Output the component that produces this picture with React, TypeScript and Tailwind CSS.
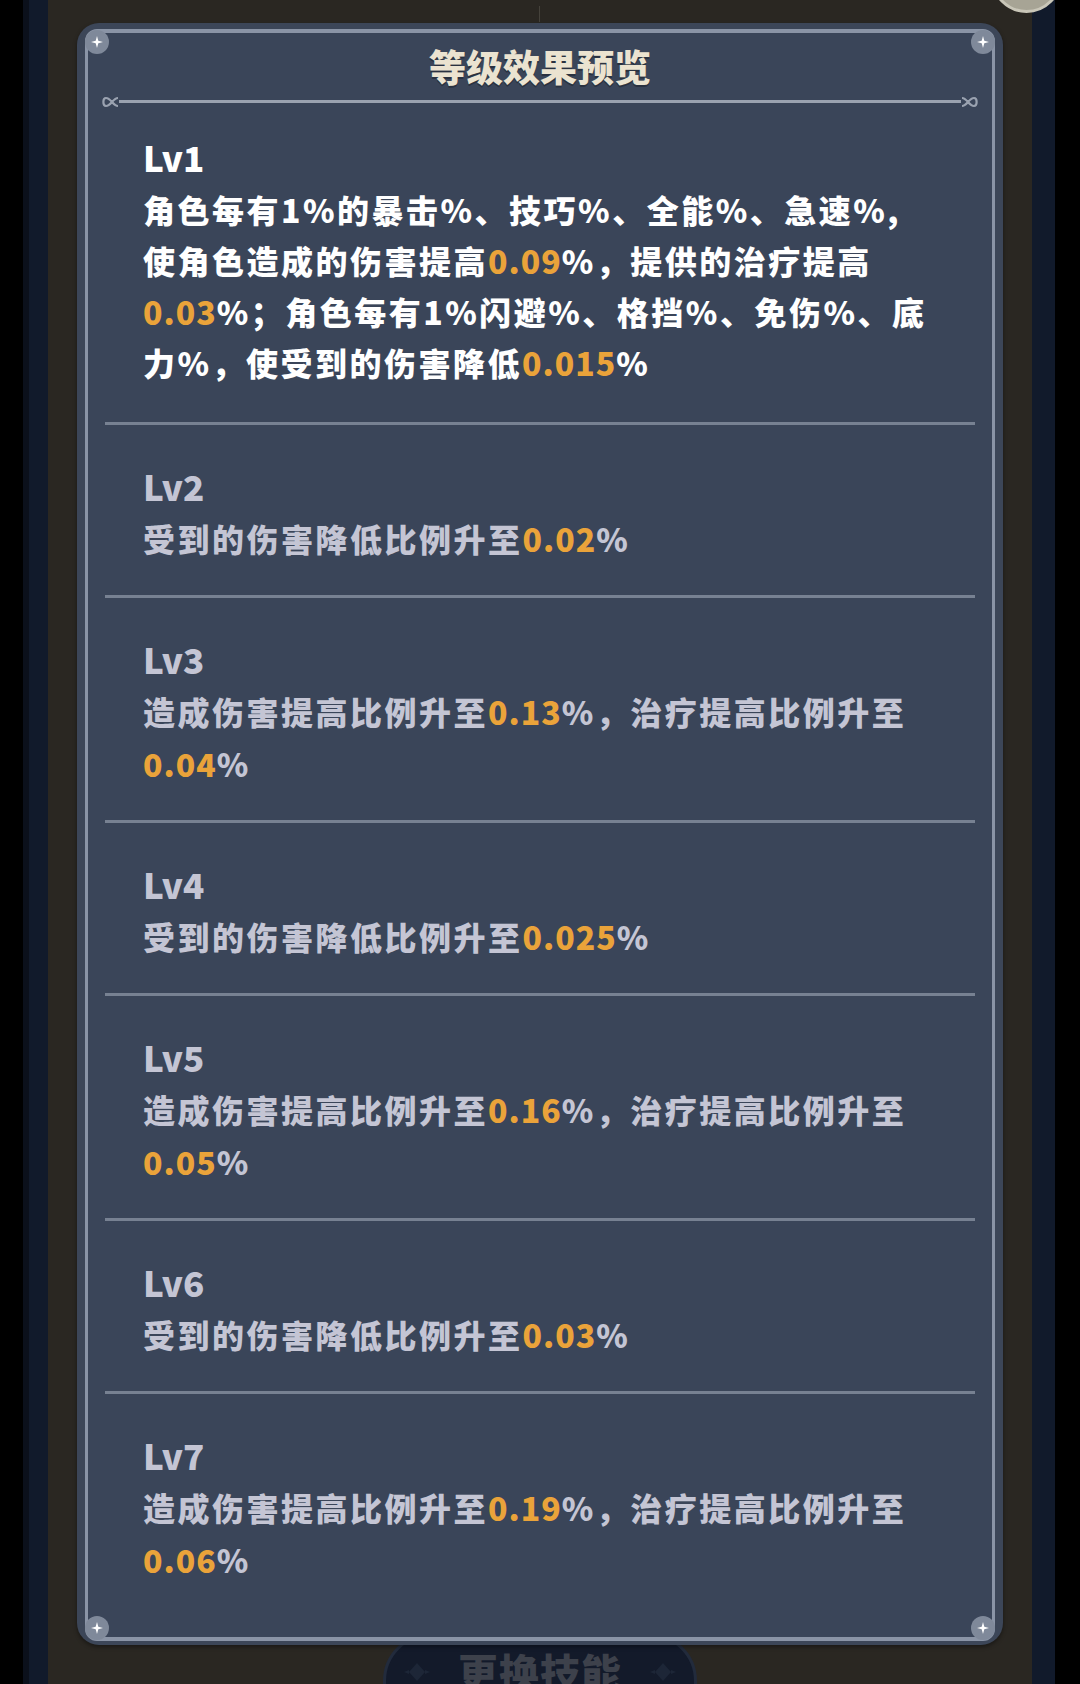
import React from 'react';

type Seg = { t: string; hi?: boolean };
type Level = { lv: string; lines: Seg[][] };

const levels: Level[] = [
  {
    lv: 'Lv1',
    lines: [
      [{ t: '角色每有1%的暴击%、技巧%、全能%、急速%,' }],
      [{ t: '使角色造成的伤害提高' }, { t: '0.09', hi: true }, { t: '%，提供的治疗提高' }],
      [{ t: '0.03', hi: true }, { t: '%；角色每有1%闪避%、格挡%、免伤%、底' }],
      [{ t: '力%，使受到的伤害降低' }, { t: '0.015', hi: true }, { t: '%' }],
    ],
  },
  { lv: 'Lv2', lines: [[{ t: '受到的伤害降低比例升至' }, { t: '0.02', hi: true }, { t: '%' }]] },
  {
    lv: 'Lv3',
    lines: [
      [{ t: '造成伤害提高比例升至' }, { t: '0.13', hi: true }, { t: '%，治疗提高比例升至' }],
      [{ t: '0.04', hi: true }, { t: '%' }],
    ],
  },
  { lv: 'Lv4', lines: [[{ t: '受到的伤害降低比例升至' }, { t: '0.025', hi: true }, { t: '%' }]] },
  {
    lv: 'Lv5',
    lines: [
      [{ t: '造成伤害提高比例升至' }, { t: '0.16', hi: true }, { t: '%，治疗提高比例升至' }],
      [{ t: '0.05', hi: true }, { t: '%' }],
    ],
  },
  { lv: 'Lv6', lines: [[{ t: '受到的伤害降低比例升至' }, { t: '0.03', hi: true }, { t: '%' }]] },
  {
    lv: 'Lv7',
    lines: [
      [{ t: '造成伤害提高比例升至' }, { t: '0.19', hi: true }, { t: '%，治疗提高比例升至' }],
      [{ t: '0.06', hi: true }, { t: '%' }],
    ],
  },
];

function Sparkle() {
  return (
    <svg width="12" height="12" viewBox="0 0 12 12">
      <path d="M6 0 L7.3 4.7 L12 6 L7.3 7.3 L6 12 L4.7 7.3 L0 6 L4.7 4.7 Z" fill="#ffffff" />
    </svg>
  );
}

function Corner({ pos }: { pos: string }) {
  return (
    <div className={`absolute ${pos} w-[24px] h-[24px] rounded-full bg-[#7f899a] flex items-center justify-center`}>
      <Sparkle />
    </div>
  );
}

function Curl({ flip }: { flip?: boolean }) {
  return (
    <svg width="18" height="14" viewBox="0 0 18 14" className={flip ? 'scale-x-[-1]' : ''}>
      <path
        d="M17 3 C12 3 10 11 5 11 C1.5 11 1.5 3 5 3 C10 3 12 11 17 11"
        fill="none"
        stroke="#9aa2b0"
        strokeWidth="2.2"
      />
    </svg>
  );
}

function Diamond() {
  return (
    <svg width="26" height="20" viewBox="0 0 26 20">
      <path d="M13 1 L21 10 L13 19 L5 10 Z" fill="#1d2637" />
      <path d="M0 10 L5 8 L5 12 Z M26 10 L21 8 L21 12 Z" fill="#1d2637" />
    </svg>
  );
}

export default function App() {
  return (
    <div className="relative w-[1080px] h-[1684px] overflow-hidden flex bg-black font-['Noto_Sans_CJK_SC','Noto_Sans',sans-serif]">
      {/* left edge */}
      <div className="w-[23px] bg-black" />
      <div className="w-[25px] bg-[#111a2b] border-l-[6px] border-[#0b101b]" />

      {/* centre */}
      <div className="relative flex-1 bg-[#2a2722] flex flex-col px-[29px] pt-[23px]">
        <div className="absolute left-[491px] top-[6px] w-[1px] h-[16px] bg-[#45423b]" />

        {/* panel */}
        <div className="relative z-10 rounded-[22px] bg-[#3c4658] px-[8px] pt-[6px] pb-[4px] shadow-[0_2px_4px_rgba(0,0,0,0.4)]">
          <div className="relative rounded-[12px] border-x-[3px] border-y-[4px] border-[#8a94a6] bg-[#3a4559]">
            <Corner pos="-left-[3px] -top-[3px]" />
            <Corner pos="-right-[3px] -top-[3px]" />
            <Corner pos="-left-[3px] -bottom-[3px]" />
            <Corner pos="-right-[3px] -bottom-[3px]" />

            <div className="pt-[11px] text-center text-[37px] leading-[44px] font-black text-[#ebe3d0] [text-shadow:0_2px_0_rgba(20,24,34,0.45)]">
              等级效果预览
            </div>

            <div className="mt-[12px] mx-[17px] flex items-center h-[3px]">
              <div className="-ml-[4px]">
                <Curl />
              </div>
              <div className="flex-1 h-[3px] bg-[#9aa2b0]" />
              <div className="-mr-[4px]">
                <Curl flip />
              </div>
            </div>

            <div className="px-[17px]">
              {levels.map((lvl, i) => {
                const first = i === 0;
                const last = i === levels.length - 1;
                const textColor = first ? 'text-white' : 'text-[#c4c5d4]';
                return (
                  <div
                    key={lvl.lv}
                    className={
                      first
                        ? 'px-[38px] pt-[27px] pb-[34px]'
                        : last
                        ? 'px-[38px] pt-[34px] pb-[52px] border-t-[3px] border-[#778192]'
                        : 'px-[38px] pt-[34px] pb-[31px] border-t-[3px] border-[#778192]'
                    }
                  >
                    <div className={`text-[35px] font-black ${first ? 'leading-[54px]' : 'leading-[53px]'} ${textColor}`}>
                      {lvl.lv}
                    </div>
                    {lvl.lines.map((line, j) => (
                      <div
                        key={j}
                        className={`whitespace-nowrap text-[32px] font-black tracking-[2.5px] ${first ? 'leading-[51px]' : 'leading-[52px]'} ${textColor}`}
                      >
                        {line.map((s, k) =>
                          s.hi ? (
                            <span key={k} className="text-[#eaa33a] tracking-[1px]">
                              {s.t}
                            </span>
                          ) : (
                            <span key={k}>{s.t}</span>
                          )
                        )}
                      </div>
                    ))}
                  </div>
                );
              })}
            </div>
          </div>
        </div>

        {/* button behind the panel */}
        <div className="self-center -mt-[12px] w-[314px] h-[110px] shrink-0 rounded-[48px] bg-[#131a2a] border-[3px] border-[#222b3c] flex items-start justify-between px-[18px] pt-[15px]">
          <div className="mt-[11px]">
            <Diamond />
          </div>
          <div className="text-[40px] leading-[40px] font-black text-[#3d414b] tracking-[1px]">更换技能</div>
          <div className="mt-[11px]">
            <Diamond />
          </div>
        </div>
      </div>

      {/* right edge */}
      <div className="w-[23px] bg-[#111a2b]" />
      <div className="w-[25px] bg-black" />

      <div className="absolute z-20 left-[991px] -top-[58px] w-[71px] h-[71px] rounded-full bg-[#a7a495] border-[3px] border-[#c9c6b8]" />
    </div>
  );
}
